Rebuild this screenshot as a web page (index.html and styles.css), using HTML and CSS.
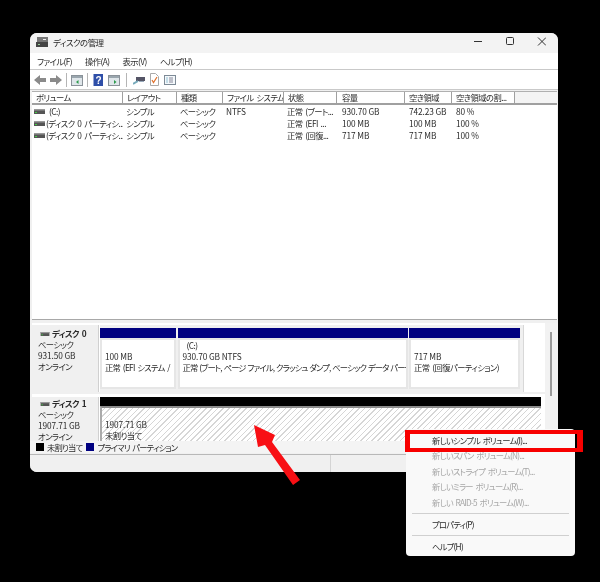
FILE: index.html
```html
<!DOCTYPE html>
<html lang="ja">
<head>
<meta charset="utf-8">
<title>ディスクの管理</title>
<link rel="stylesheet" href="styles.css">
</head>
<body>
<svg class="defs" width="0" height="0">
  <symbol id="disk" viewBox="0 0 11 5"><rect width="11" height="5" fill="#555"/><rect y="0" width="11" height="1.5" fill="#999"/><rect x="1" y="3" width="2" height="1" fill="#4c4"/></symbol>
</svg>
<main class="window">
  <header class="titlebar">
    <svg class="app-icon" width="14" height="13" viewBox="0 0 14 13"><rect x="2" y="1" width="11" height="5" fill="#777"/><rect x="1" y="6" width="12" height="5" fill="#444"/><rect x="3" y="8" width="2" height="1" fill="#9c9"/><rect x="8" y="3" width="3" height="1" fill="#eee"/></svg>
    <span class="title">ディスクの管理</span>
    <svg class="caption" width="72" height="12" viewBox="0 0 72 12"><path d="M0 5.500h8" stroke="#333"/><rect x="32.500" y="1.500" width="7" height="7" rx="1" fill="none" stroke="#333"/><path d="M64 1.500l8 8M72 1.500l-8 8" stroke="#333"/></svg>
  </header>
  <nav class="menubar"><span>ファイル(F)</span><span>操作(A)</span><span>表示(V)</span><span>ヘルプ(H)</span></nav>
  <div class="toolbar">
    <svg class="tool" width="12" height="12" viewBox="0 0 12 12"><path d="M0 6l6-5v3h6v4H6v3z" fill="#8a8a8a"/></svg>
    <svg class="tool" width="12" height="12" viewBox="0 0 12 12"><path d="M12 6L6 1v3H0v4h6v3z" fill="#8a8a8a"/></svg>
    <i class="tool-sep"></i>
    <svg class="tool" width="12" height="12" viewBox="0 0 12 12"><rect x=".5" y="1.500" width="11" height="10" fill="#dfe6ea" stroke="#8a9299"/><rect x="1" y="2" width="10" height="2" fill="#9aa6ae"/><path d="M5 8l2.500-2v4z" fill="#2a9a4a"/></svg>
    <i class="tool-sep"></i>
    <svg class="tool" width="12" height="12" viewBox="0 0 12 12"><rect x="1.500" y="0" width="9.500" height="12" fill="#2f4fa8"/><text x="6.200" y="10" class="help-mark">?</text></svg>
    <svg class="tool" width="12" height="12" viewBox="0 0 12 12"><rect x=".5" y="1.500" width="11" height="10" fill="#dfe6ea" stroke="#8a9299"/><rect x="1" y="2" width="10" height="2" fill="#9aa6ae"/><path d="M6 6l2.500 2L6 10z" fill="#2a9a4a"/></svg>
    <i class="tool-sep wide"></i>
    <svg class="tool" width="12" height="12" viewBox="0 0 12 12"><rect x="3" y="3" width="9" height="4" fill="#556"/><path d="M0 10l5-3" stroke="#7ab" stroke-width="2"/><rect x="6" y="7" width="5" height="1" fill="#9ab"/></svg>
    <svg class="tool" width="11" height="13" viewBox="0 0 11 13"><path d="M1.500.5h5l3 3v9h-8z" fill="#fff" stroke="#aaa"/><path d="M3 7l1.500 2.500L8 4" fill="none" stroke="#e0702a" stroke-width="1.200"/></svg>
    <svg class="tool" width="12" height="10" viewBox="0 0 12 10"><rect x=".5" y=".5" width="11" height="9" fill="#f4f8fb" stroke="#7d8a96"/><path d="M2.500 3h1M2.500 5h1M2.500 7h1" stroke="#38a"/><path d="M5 3h4M5 5h4M5 7h4" stroke="#889"/></svg>
  </div>
  <section class="volumes">
    <div class="row head"><span>ボリューム</span><span>レイアウト</span><span>種類</span><span>ファイル システム</span><span>状態</span><span>容量</span><span>空き領域</span><span>空き領域の割...</span></div>
    <div class="row"><span class="vol"><svg width="11" height="5"><use href="#disk"/></svg><em class="c">(C:)</em></span><span>シンプル</span><span>ベーシック</span><span class="n">NTFS</span><span>正常 (ブート...</span><span class="n">930.70 GB</span><span class="n">742.23 GB</span><span class="n">80 %</span></div>
    <div class="row"><span class="vol"><svg width="11" height="5"><use href="#disk"/></svg><em>(ディスク 0 パーティシ...</em></span><span>シンプル</span><span>ベーシック</span><span></span><span>正常 (EFI ...</span><span class="n">100 MB</span><span class="n">100 MB</span><span class="n">100 %</span></div>
    <div class="row"><span class="vol"><svg width="11" height="5"><use href="#disk"/></svg><em>(ディスク 0 パーティシ...</em></span><span>シンプル</span><span>ベーシック</span><span></span><span>正常 (回復...</span><span class="n">717 MB</span><span class="n">717 MB</span><span class="n">100 %</span></div>
  </section>
  <section class="disks">
    <div class="disk-list">
      <div class="disk first">
        <div class="disk-info">
          <strong><svg width="10" height="4"><use href="#disk"/></svg>ディスク 0</strong>
          <span>ベーシック</span><span class="n">931.50 GB</span><span>オンライン</span>
        </div>
        <div class="parts">
          <div class="part efi"><b class="bar"></b><div class="part-body"><span class="n">100 MB</span><span class="tight">正常 (EFI システム /</span></div></div>
          <div class="part main"><b class="bar"></b><div class="part-body"><strong class="label">(C:)</strong><span class="n">930.70 GB NTFS</span><span class="tight">正常 (ブート, ページ ファイル, クラッシュ ダンプ, ベーシック データ パーテ</span></div></div>
          <div class="part rec"><b class="bar"></b><div class="part-body"><span class="n">717 MB</span><span>正常 (回復パーティション)</span></div></div>
        </div>
      </div>
      <div class="disk second">
        <div class="disk-info">
          <strong><svg width="10" height="4"><use href="#disk"/></svg>ディスク 1</strong>
          <span>ベーシック</span><span class="n">1907.71 GB</span><span>オンライン</span>
        </div>
        <div class="free">
          <b class="bar black"></b>
          <div class="hatch"><span class="n">1907.71 GB</span><span>未割り当て</span></div>
        </div>
      </div>
    </div>
    <div class="scroll"><i></i></div>
  </section>
  <div class="legend"><i class="swatch black"></i><span>未割り当て</span><i class="swatch navy"></i><span>プライマリ パーティション</span></div>
  <footer class="status"><i></i></footer>
</main>
<ul class="context">
  <li>新しいシンプル ボリューム(I)...</li>
  <li class="off">新しいスパン ボリューム(N)...</li>
  <li class="off">新しいストライプ ボリューム(T)...</li>
  <li class="off">新しいミラー ボリューム(R)...</li>
  <li class="off">新しい RAID-5 ボリューム(W)...</li>
  <li class="line"></li>
  <li>プロパティ(P)</li>
  <li class="line"></li>
  <li>ヘルプ(H)</li>
</ul>
<div class="highlight"></div>
<svg class="arrow" width="60" height="70" viewBox="0 0 60 70"><path d="M4 1L25 11 22 18 50 56 43 61 15 21 8 23z" fill="#f80f14"/></svg>
</body>
</html>
```
FILE: styles.css
```css
* { box-sizing: border-box; }
html, body { margin: 0; height: 582px; overflow: hidden; background: #000; }
body {
  position: relative;
  padding: 33px 42px 0 30px;
  font: 8.300px/12px "Noto Sans CJK JP", "Noto Sans", sans-serif;
  font-feature-settings: "palt";
  letter-spacing: -.55px;
  word-spacing: 1.500px;
  color: #2a2a2a;
  filter: blur(.3px);
}
.n { letter-spacing: -.1px; word-spacing: 0; }
.tight { letter-spacing: -.72px; }
.main .tight { letter-spacing: -.86px; word-spacing: .8px; }
.defs { position: absolute; }
svg { display: block; flex: none; }
.window {
  width: 528px; height: 439px; background: #f0f0f0;
  border-radius: 7px; overflow: hidden;
  display: flex; flex-direction: column;
}
.titlebar {
  height: 20px; flex: none; background: #f3f3f3;
  display: flex; align-items: center; padding: 0 12px 2px 5px;
}
.app-icon { margin-right: 2px; }
.title { flex: 1; font-size: 8.500px; padding-left: 2px; }
.menubar {
  height: 17px; flex: none; background: #fff; border-bottom: 1px solid #c9c9c9;
  display: flex; align-items: center; gap: 13px; padding-left: 7px;
}
.toolbar {
  height: 20px; flex: none; background: #fff; border-bottom: 1px solid #c9c9c9;
  display: flex; align-items: center; gap: 4px; padding-left: 4px;
}
.tool-sep { width: 1px; height: 14px; background: #b5b5b5; }
.tool-sep.wide { margin-left: 2px; margin-right: 2px; }
.help-mark { font: 700 10px "Liberation Sans", sans-serif; fill: #fff; text-anchor: middle; }
.volumes {
  height: 229px; flex: none; margin: 1px 1px 0 2px; background: #fff;
  border-bottom: 1px solid #a8a8a8;
}
.row {
  display: grid; grid-template-columns: 91px 54px 46px 61px 53px 68px 47px 63px;
  height: 12px;
}
.row > span { padding-left: 3px; white-space: nowrap; overflow: hidden; }
.row > span:nth-child(6) { padding-left: 5px; }
.row > span:nth-child(7), .row > span:nth-child(8) { padding-left: 4px; }
.row.head {
  height: 14px; background: #f4f4f4; border-top: 1px solid #b0b0b0; border-bottom: 2px solid #a0a0a0;
  line-height: 11px;
}
.head > span { background: #fff; border-right: 1px solid #a0a0a0; padding-left: 4px; }
.vol { display: flex; align-items: center; gap: 1px; padding-left: 2px !important; }
.vol em { font-style: normal; }
.vol em.c { margin-left: 3px; }
.disks { height: 118px; flex: none; display: flex; overflow: hidden; padding-left: 2px; margin-top: 3px; }
.disk-list { flex: 1; min-width: 0; background: #fff; }
.disk { display: flex; border-bottom: 2px solid #f0f0f0; }
.disk.first { height: 71px; padding-top: 2px; }
.disk.second { height: 60px; padding-top: 3px; }
.disk-info {
  width: 67px; flex: none; background: #f0f0f0; border-right: 1px solid #d0d0d0;
  padding: 3px 0 0 6px; display: flex; flex-direction: column; line-height: 11px;
}
.second .disk-info { padding-top: 1px; }
.disk-info strong { display: flex; align-items: center; gap: 2px; font-weight: 700; padding-left: 2px; }
.parts {
  width: 424px; margin-left: 1px; height: 67px; background: #f0f0f0; padding: 3px 3px 3px 0;
  display: flex; gap: 1.500px; border-right: 1px solid #d8d8d8;
}
.part { display: flex; flex-direction: column; background: #fff; min-width: 0; }
.efi { width: 76px; flex: none; } .main { width: 230px; flex: none; } .rec { width: 111px; flex: none; }
.bar { display: block; height: 10px; background: #000080; flex: none; }
.part-body {
  flex: 1; border: 2px solid #e6e6e6; background: #fff; padding: 11px 0 0 3px;
  display: flex; flex-direction: column; white-space: nowrap; overflow: hidden; line-height: 11px;
}
.main .part-body { padding-top: 0; }
.label { padding-left: 4px; font-weight: 400; }
.free { width: 441px; margin-left: 1px; display: flex; flex-direction: column; }
.bar.black { height: 9px; background: #000; }
.hatch {
  flex: 1; border-top: 2px solid #8c8c8c; border-left: 2px solid #aaa; padding: 11px 0 0 3px;
  background: repeating-linear-gradient(-45deg, #fff 0 3px, #d6d6d6 3px 4px);
  display: flex; flex-direction: column; line-height: 11px;
}
.scroll { width: 13px; flex: none; background: #f2f2f2; padding: 9px 0 0 5px; }
.scroll i { display: block; width: 2px; height: 64px; background: #9a9a9a; }
.legend {
  height: 12px; flex: none; display: flex; align-items: center; gap: 3px; padding-left: 6px; background: #f4f4f4;
  letter-spacing: -.8px;
}
.swatch { width: 8px; height: 8px; }
.swatch.black { background: #000; }
.swatch.navy { background: #000080; margin-left: 1px; }
.status { flex: 1; border-top: 1px solid #b8b8b8; background: #f0f0f0; margin-top: 1px; }
.status i { display: block; width: 1px; height: 100%; margin-left: 300px; background: #d4d4d4; }
.context {
  position: absolute; left: 406px; top: 429px; width: 169px; height: 127px;
  margin: 0; padding: 4px 3px; list-style: none; background: #f9f9f9; border-radius: 4px;
  line-height: 15.400px; letter-spacing: -.75px;
}
.context li { height: 15.400px; padding-left: 23px; white-space: nowrap; }
.context .off { color: #a6a6a6; }
.context .line { height: 1px; margin: 3px; padding: 0; background: #d0d0d0; }
.highlight {
  position: absolute; left: 405px; top: 430px; width: 178px; height: 22px;
  border: solid #f80000; border-width: 4px 6px 4px 5px;
}
.arrow { position: absolute; left: 250px; top: 424px; }
```
